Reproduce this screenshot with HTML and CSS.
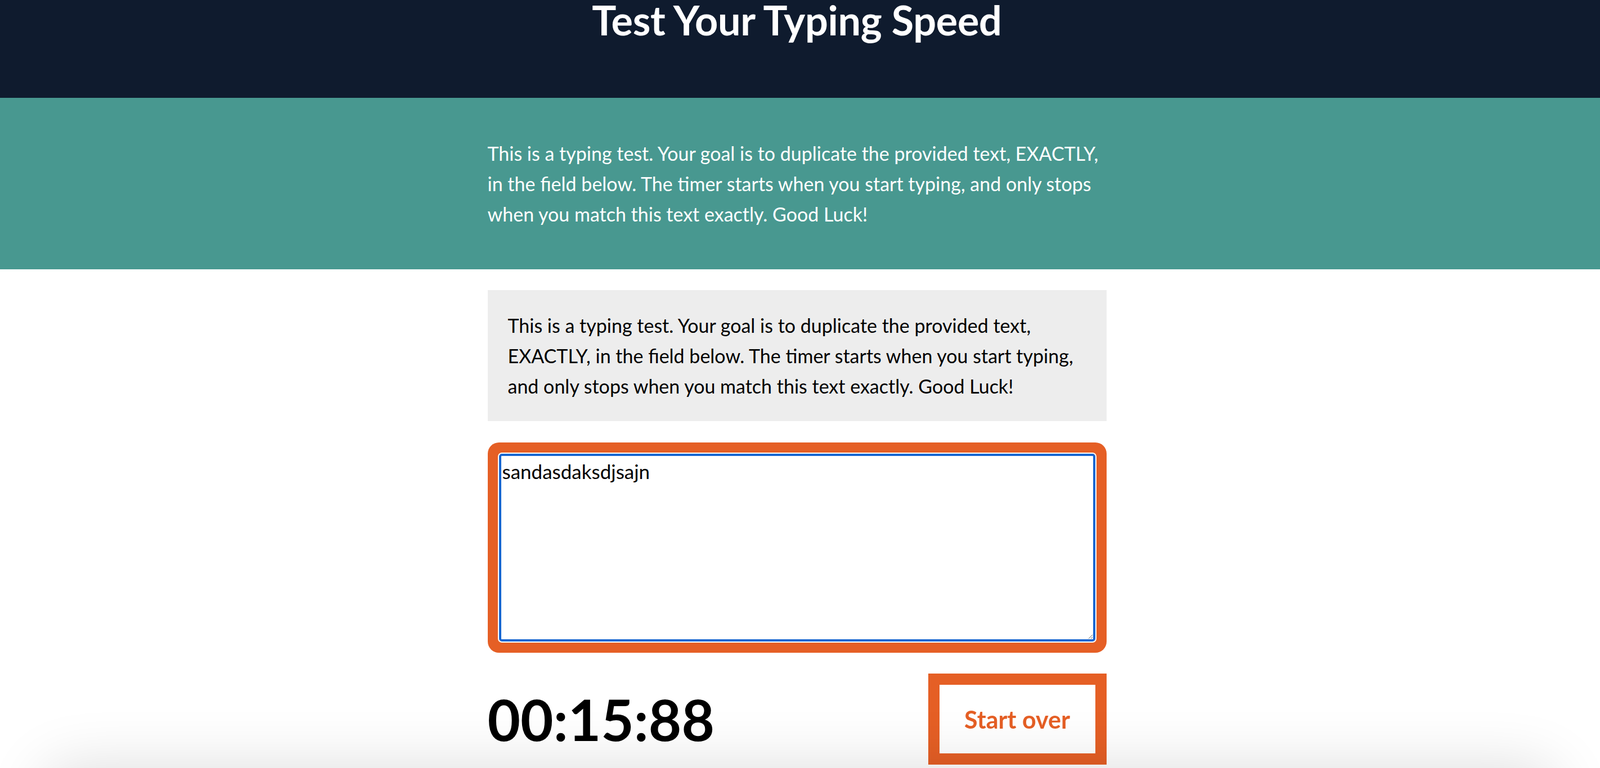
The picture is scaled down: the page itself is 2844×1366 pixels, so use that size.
FILE: index.html
```html
<!DOCTYPE html>
<html lang="en">
<head>
<meta charset="utf-8">
<title>Test Your Typing Speed</title>
<link rel="stylesheet" href="styles.css">
</head>
<body>
<header class="masthead">
  <h1 class="masthead-title">Test Your Typing Speed</h1>
</header>
<section class="intro">
  <div class="wrap">
    <p class="intro-text">This is a typing test. Your goal is to duplicate the provided text, EXACTLY,<br>in the field below. The timer starts when you start typing, and only stops<br>when you match this text exactly. Good Luck!</p>
  </div>
</section>
<main class="wrap test">
  <div class="origin-text">
    <p>This is a typing test. Your goal is to duplicate the provided text,<br>EXACTLY, in the field below. The timer starts when you start typing,<br>and only stops when you match this text exactly. Good Luck!</p>
  </div>
  <div class="test-wrapper">
    <textarea class="test-area" id="test-area" name="textarea" rows="6">sandasdaksdjsajn</textarea>
  </div>
  <div class="meta">
    <div class="timer">00:15:88</div>
    <button class="reset" type="button">Start over</button>
  </div>
</main>
<div class="sheet"></div>
<script src="script.js"></script>
</body>
</html>
```
FILE: styles.css
```css
html, body {
  margin: 0;
  padding: 0;
  background: #ffffff;
}
body {
  font-family: "Lato", "Source Sans Pro", "Liberation Sans", sans-serif;
  font-size: 34px;
  line-height: 54px;
  color: #000;
  overflow: hidden;
}
.masthead {
  background: #0f1b2e;
  height: 174px;
  box-sizing: border-box;
  padding: 0 11px 0 0;
}
.masthead-title {
  margin: 0;
  text-align: center;
  color: #fff;
  font-size: 72px;
  line-height: 70px;
  font-weight: 700;
  letter-spacing: -0.3px;
}
.intro {
  background: #489890;
  padding: 72px 0 71px;
}
.wrap {
  width: 1100px;
  margin-left: calc((100% - 1111px) / 2);
}
.intro-text {
  margin: 0;
  color: #fff;
  white-space: nowrap;
}
.test {
  padding-top: 37px;
}
.origin-text {
  background: #ededed;
  padding: 36px 36px 35px;
}
.origin-text p {
  margin: 0;
  white-space: nowrap;
}
.test-wrapper {
  margin-top: 38px;
  background: #e55f25;
  border-radius: 20px;
  padding: 20px;
}
.test-area {
  display: block;
  width: 100%;
  height: 334px;
  box-sizing: border-box;
  margin: 0;
  border: 4px solid #1766d1;
  border-radius: 5px;
  outline: 2px solid #ffffff;
  padding: 6px 2px;
  font-family: "Lato", "Liberation Sans", sans-serif;
  font-size: 35px;
  line-height: normal;
  color: #000;
  caret-color: #000;
  background: #fff;
}
.meta {
  margin-top: 37px;
  display: flex;
  justify-content: space-between;
  align-items: center;
}
.timer {
  font-size: 101px;
  line-height: 1;
  font-weight: 700;
}
.reset {
  width: 317px;
  height: 162px;
  box-sizing: border-box;
  border: 20px solid #e55f25;
  background: #fff;
  color: #e55f25;
  font-family: "Lato", "Liberation Sans", sans-serif;
  font-size: 43px;
  font-weight: 700;
  padding: 0;
  cursor: pointer;
}
.sheet {
  position: fixed;
  left: 80px;
  right: 80px;
  top: 100vh;
  height: 200px;
  border-radius: 40px;
  box-shadow: 0 0 110px rgba(0, 0, 0, 0.14);
  z-index: 5;
}
```
FILE: script.js
```js
var area = document.getElementById('test-area');
area.focus();
area.setSelectionRange(area.value.length, area.value.length);
```
